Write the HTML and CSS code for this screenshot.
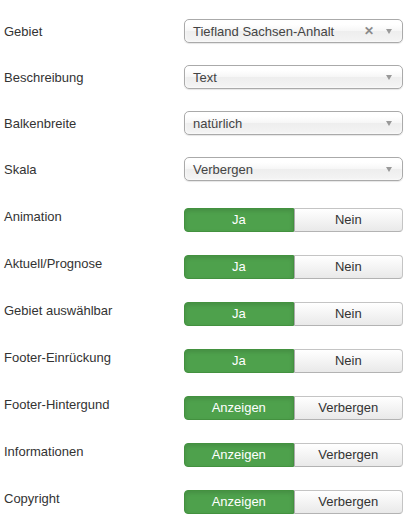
FILE: index.html
```html
<!DOCTYPE html>
<html lang="de">
<head>
<meta charset="utf-8">
<link rel="stylesheet" href="styles.css">
</head>
<body>
<div class="form">
  <div class="row sel">
    <div class="label">Gebiet</div>
    <div class="select"><span class="val">Tiefland Sachsen-Anhalt</span><span class="clear">&#10005;</span><span class="arrow"></span></div>
  </div>
  <div class="row sel">
    <div class="label">Beschreibung</div>
    <div class="select"><span class="val">Text</span><span class="arrow"></span></div>
  </div>
  <div class="row sel">
    <div class="label">Balkenbreite</div>
    <div class="select"><span class="val">natürlich</span><span class="arrow"></span></div>
  </div>
  <div class="row sel">
    <div class="label">Skala</div>
    <div class="select"><span class="val">Verbergen</span><span class="arrow"></span></div>
  </div>
  <div class="row tog first">
    <div class="label">Animation</div>
    <div class="toggle"><span class="on">Ja</span><span class="off">Nein</span></div>
  </div>
  <div class="row tog">
    <div class="label">Aktuell/Prognose</div>
    <div class="toggle"><span class="on">Ja</span><span class="off">Nein</span></div>
  </div>
  <div class="row tog">
    <div class="label">Gebiet auswählbar</div>
    <div class="toggle"><span class="on">Ja</span><span class="off">Nein</span></div>
  </div>
  <div class="row tog">
    <div class="label">Footer-Einrückung</div>
    <div class="toggle"><span class="on">Ja</span><span class="off">Nein</span></div>
  </div>
  <div class="row tog">
    <div class="label">Footer-Hintergund</div>
    <div class="toggle"><span class="on">Anzeigen</span><span class="off">Verbergen</span></div>
  </div>
  <div class="row tog">
    <div class="label">Informationen</div>
    <div class="toggle"><span class="on">Anzeigen</span><span class="off">Verbergen</span></div>
  </div>
  <div class="row tog">
    <div class="label">Copyright</div>
    <div class="toggle"><span class="on">Anzeigen</span><span class="off">Verbergen</span></div>
  </div>
</div>
</body>
</html>
```
FILE: styles.css
```css
html, body {
  margin: 0;
  padding: 0;
  background: #fff;
}
body {
  font-family: "Liberation Sans", Arial, Helvetica, sans-serif;
  font-size: 13px;
  color: #333;
}
.form {
  padding: 19px 0 0 4px;
  display: flex;
  flex-direction: column;
}
.row {
  display: flex;
  align-items: flex-start;
}
.label {
  width: 180px;
  line-height: 18px;
  color: #333;
}
.row.sel {
  height: 46px;
}
.row.sel .label {
  padding-top: 4px;
}
.row.tog {
  height: 47px;
}
.row.tog.first {
  margin-top: 5px;
}
.row.tog .label {
  margin-top: 0;
}
.select {
  box-sizing: border-box;
  width: 219px;
  height: 24px;
  border: 1px solid #aaa;
  border-radius: 5px;
  background: linear-gradient(#ffffff 20%, #f6f6f6 50%, #eeeeee 52%, #f4f4f4 100%);
  box-shadow: inset 0 0 3px #fff, 0 1px 1px rgba(0,0,0,0.1);
  display: flex;
  align-items: center;
  padding: 0 8px;
  color: #444;
}
.select .val {
  flex: 1;
  line-height: 22px;
  padding-top: 1px;
}
.select .clear {
  font-size: 12px;
  color: #8a8a8a;
  margin-right: 12px;
  font-weight: bold;
  line-height: 12px;
}
.select .arrow {
  width: 0;
  height: 0;
  border-left: 3.5px solid transparent;
  border-right: 3.5px solid transparent;
  border-top: 5px solid #999;
  margin-right: 2px;
}
.toggle {
  box-sizing: border-box;
  width: 219px;
  height: 24px;
  display: flex;
}
.toggle span {
  flex: 1;
  display: flex;
  align-items: center;
  justify-content: center;
  box-sizing: border-box;
  line-height: 18px;
}
.toggle .on {
  background: #4ea14c;
  color: #fff;
  border: 1px solid #43913f;
  border-radius: 4px 0 0 4px;
  box-shadow: inset 0 2px 4px rgba(0,0,0,0.12);
}
.toggle .off {
  background: linear-gradient(#ffffff, #e9e9e9);
  color: #333;
  border: 1px solid #c4c4c4;
  border-left-color: #aaa;
  border-bottom-color: #b3b3b3;
  border-radius: 0 4px 4px 0;
}
```
